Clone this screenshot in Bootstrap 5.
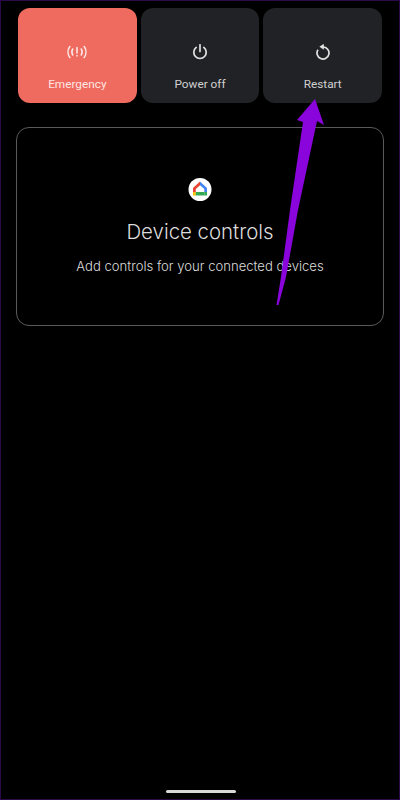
<!DOCTYPE html>
<html lang="en"><head><meta charset="utf-8">
<link rel="stylesheet" href="https://cdn.jsdelivr.net/npm/bootstrap@5.3.0/dist/css/bootstrap.min.css">
<style>
html,body{margin:0;height:800px;background:#000;overflow:hidden}
.screen{position:relative;width:400px;height:800px;background:#000;border:1px solid #2a0a4a;padding:7px 17px 0 17px;font-family:Roboto,"Liberation Sans",sans-serif}
.tiles{gap:4px;height:95px}
.tile{flex:1 1 0;background:#212226;border-radius:12px;color:#d0d0d0;font-size:11.8px;line-height:14px;padding-top:36px}
.tile svg{display:block;margin-bottom:17px}
.tile-red{background:#ef6a5f;color:#fde6e3}
.panel{margin:24px -2px 0 -2px;height:199px;border:1px solid #5a5a5a;border-radius:13px;color:#dcdcdc;padding-top:50px}
.panel h1{font-family:Inter,"Open Sans",sans-serif;font-size:20.4px;font-weight:300;line-height:26px;margin:17px 0 12px}
.panel p{font-family:Inter,"Open Sans",sans-serif;font-size:13.1px;font-weight:300;line-height:18px;margin:0}
.pill{position:absolute;left:165px;bottom:6px;width:70px;height:3px;border-radius:2px;background:#d8d8d8}
.arrow{position:absolute;left:-1px;top:-1px}
</style></head><body>
<div class="screen">
  <div class="d-flex tiles">
    <div class="tile tile-red d-flex flex-column align-items-center">
      <svg width="22" height="16" viewBox="0 0 22 16" fill="none" stroke="#fde6e3" stroke-width="1.6" stroke-linecap="round"><path d="M3.800 2.500C1.500 5.700 1.500 10.300 3.800 13.500M6.700 5C5.700 6.800 5.700 9.200 6.700 11M18.200 2.500C20.500 5.700 20.500 10.300 18.200 13.500M15.300 5C16.300 6.800 16.300 9.200 15.300 11M11 3.500V9M11 11.500v.4"/></svg>
      <span>Emergency</span>
    </div>
    <div class="tile d-flex flex-column align-items-center">
      <svg width="20" height="16" viewBox="0 0 20 16" fill="none" stroke="#e2e2e2" stroke-width="1.7" stroke-linecap="round"><path d="M10 .8v6.700M6.200 3.400a6.200 6.200 0 1 0 7.600 0"/></svg>
      <span>Power off</span>
    </div>
    <div class="tile d-flex flex-column align-items-center">
      <svg width="20" height="16" viewBox="0 0 20 16" fill="none" stroke="#e2e2e2" stroke-width="1.7"><path d="M10 3a6 6 0 1 1-5 2.700"/><path fill="#e2e2e2" stroke="none" d="M10.800-.2v6L6.400 2.800z"/></svg>
      <span>Restart</span>
    </div>
  </div>
  <div class="panel d-flex flex-column align-items-center text-center">
    <svg width="24" height="24" viewBox="0 0 24 24" class="home-logo"><circle cx="12" cy="11.500" r="11.500" fill="#fff"/><path d="M12 3.500 5 10v4h2.800v-2.900L12 7.200z" fill="#ea4335"/><path d="M5 14v3.500h2.800V14z" fill="#fbbc04"/><path d="M12 3.500v3.700l4.300 3.900V14H19v-4z" fill="#4285f4"/><rect x="7.800" y="14" width="8.500" height="3.500" fill="#34a853"/><rect x="16.300" y="14" width="2.700" height="3.500" fill="#34a853"/></svg>
    <h1>Device controls</h1>
    <p>Add controls for your connected devices</p>
  </div>
  <div class="pill"></div>
  <svg class="arrow" width="400" height="800" viewBox="0 0 400 800"><path d="M315 99 324 125 317 121 298 210 286 277 278.500 305 276.500 305 281 277 290 210 303 122 297 120z" fill="#8a04dc"/></svg>
</div>
</body></html>
